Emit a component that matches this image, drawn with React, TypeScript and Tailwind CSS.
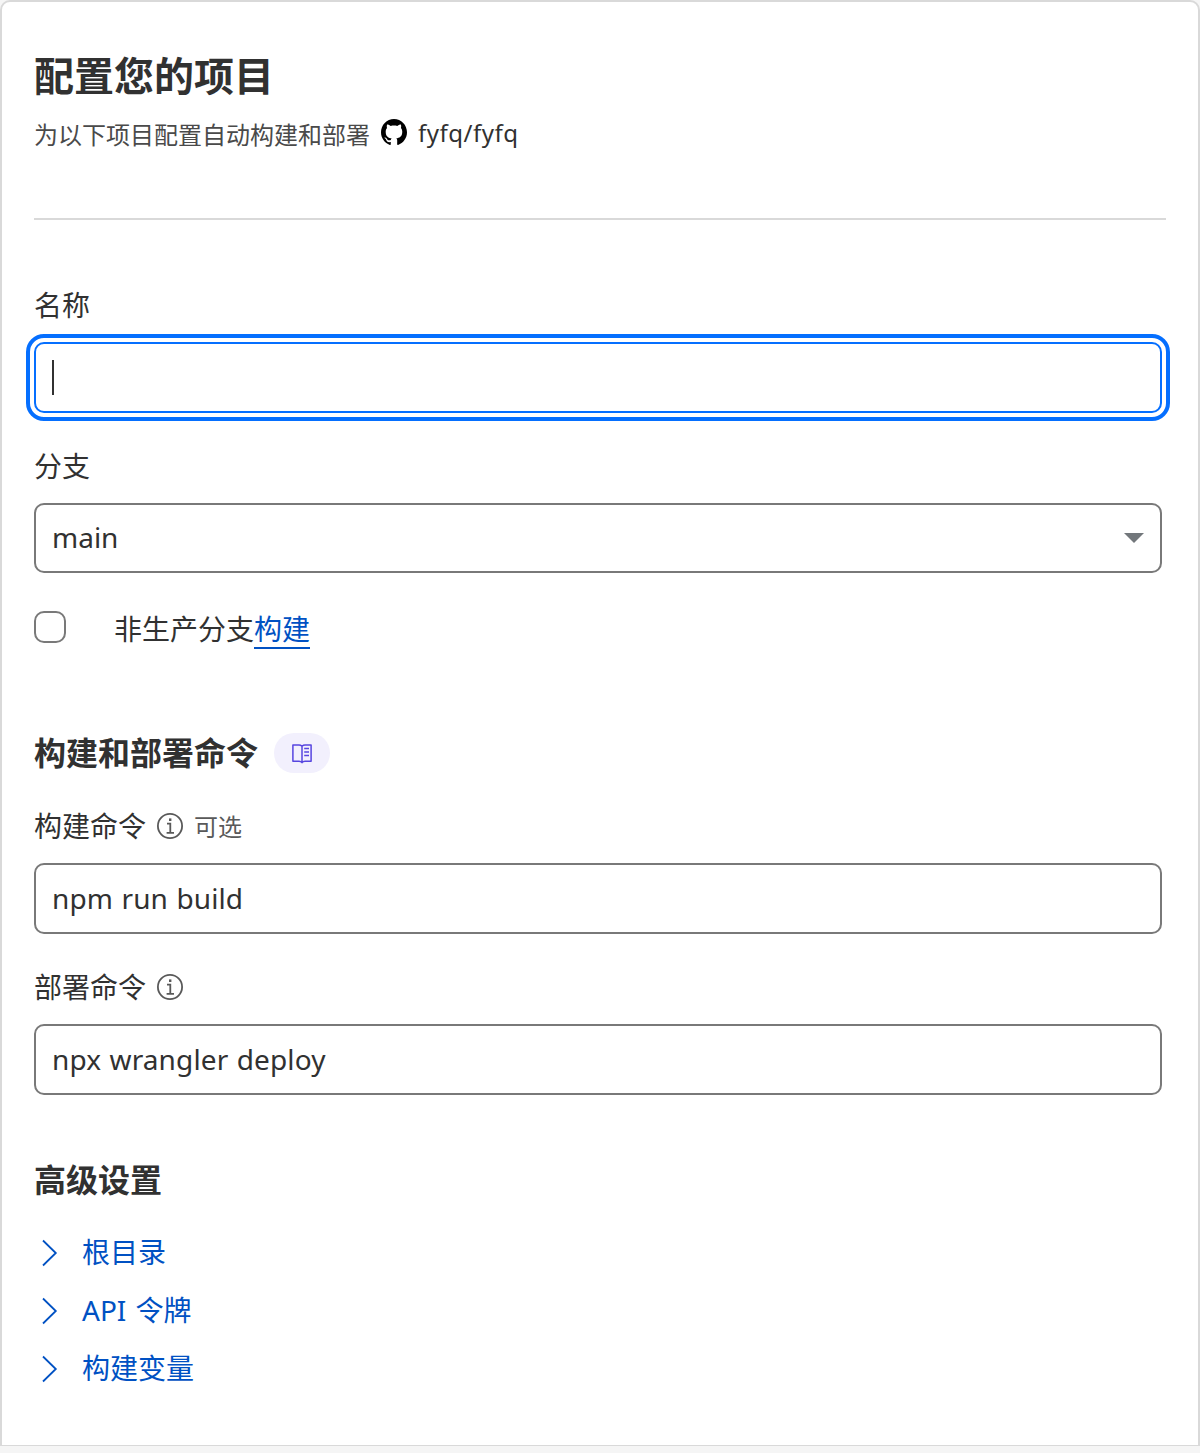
import type { ReactNode } from "react";

function GithubMark() {
  return (
    <svg viewBox="0 0.297 24 23.42" className="ml-[11px] h-[26px] w-[26px] shrink-0 -translate-y-[3px] fill-black" preserveAspectRatio="none">
      <path d="M12 .297c-6.63 0-12 5.373-12 12 0 5.303 3.438 9.8 8.205 11.385.6.113.82-.258.82-.577 0-.285-.01-1.04-.015-2.04-3.338.724-4.042-1.61-4.042-1.61C4.422 18.07 3.633 17.7 3.633 17.7c-1.087-.744.084-.729.084-.729 1.205.084 1.838 1.236 1.838 1.236 1.07 1.835 2.809 1.305 3.495.998.108-.776.417-1.305.76-1.605-2.665-.3-5.466-1.332-5.466-5.93 0-1.31.465-2.38 1.235-3.22-.135-.303-.54-1.523.105-3.176 0 0 1.005-.322 3.3 1.23.96-.267 1.98-.399 3-.405 1.02.006 2.04.138 3 .405 2.28-1.552 3.285-1.23 3.285-1.23.645 1.653.24 2.873.12 3.176.765.84 1.23 1.91 1.23 3.22 0 4.61-2.805 5.625-5.475 5.92.42.36.81 1.096.81 2.22 0 1.606-.015 2.896-.015 3.286 0 .315.21.69.825.57C20.565 22.092 24 17.592 24 12.297c0-6.627-5.373-12-12-12" />
    </svg>
  );
}

function InfoIcon() {
  return (
    <svg viewBox="0 0 26 26" className="ml-[11px] h-[26px] w-[26px] shrink-0" fill="none" stroke="#595959">
      <circle cx="13" cy="13" r="12.1" strokeWidth="1.8" />
      <path d="M10 10.6h3.300v9.200M9.600 19.900h7.400" strokeWidth="1.8" />
      <rect x="12" y="5.400" width="2.400" height="2.600" fill="#595959" stroke="none" />
    </svg>
  );
}

function BookIcon() {
  return (
    <svg viewBox="0 0 20 20" className="h-5 w-5 translate-y-px" fill="none" stroke="#5746e0" strokeWidth="1.5">
      <path d="M10 2.200C9 1.300 8 1 7 1H.9v16.300H7c1.200 0 2.300.4 3 1.300.7-.9 1.800-1.300 3-1.300h6.100V1H13c-1 0-2 .3-3 1.200zM10 2v16.500" strokeLinejoin="round" />
      <path d="M12.200 4.600h4.800M12.200 8h4.800M12.200 11.400h4.800" />
    </svg>
  );
}

function Chevron() {
  return (
    <svg viewBox="0 0 16 28" className="ml-2 h-7 w-4" fill="none" stroke="#0051c3" strokeWidth="1.8">
      <path d="M1 1.500 13.800 14 1 26.500" />
    </svg>
  );
}

function Label({ children }: { children: ReactNode }) {
  return <div className="flex h-10 items-center text-[28px]">{children}</div>;
}

function Field({ children }: { children: ReactNode }) {
  return (
    <div className="mt-[17px] mr-1 flex h-[71px] items-center rounded-[10px] border-2 border-[#797979] pb-0.5 pl-4 text-[28px] tracking-[0.12px] [word-spacing:1px]">
      {children}
    </div>
  );
}

const links = ["根目录", "API 令牌", "构建变量"];

export default function App() {
  return (
    <div className="h-[1453px] bg-[#f5f5f5] font-['Noto_Sans','Noto_Sans_CJK_SC',sans-serif] text-[#313131]">
      <main className="flex h-[1446px] flex-col rounded-t-[10px] border-2 border-b-1 border-[#d9d9d9] bg-white px-8">
        <h1 className="mt-[49px] h-[50px] text-[40px] leading-[50px] font-bold">配置您的项目</h1>
        <div className="mt-4 flex h-9 items-center text-2xl text-[#4a4a4a]">
          <span>为以下项目配置自动构建和部署</span>
          <GithubMark />
          <span className="ml-[11px] pb-1 tracking-[0.5px] text-[#313131]">fyfq/fyfq</span>
        </div>
        <hr className="mt-[65px] border-t-2 border-[#d9d9d9]" />

        <div className="mt-[65px]"><Label>名称</Label></div>
        <div className="mt-[17px] mr-1 flex h-[71px] items-center rounded-[10px] border-2 border-[#056fff] pl-4 outline-4 outline-offset-4 outline-[#056fff]">
          <span className="h-[35px] w-0.5 bg-[#313131]" />
        </div>

        <div className="mt-[33px]"><Label>分支</Label></div>
        <div className="mt-[17px] mr-1 flex h-[70px] items-center justify-between rounded-[10px] border-2 border-[#797979] px-4 text-[28px]">
          <span className="pb-0.5">main</span>
          <svg viewBox="0 0 20 10" className="h-2.5 w-5 fill-[#72777b]"><path d="M0 0h20L10 10z" /></svg>
        </div>

        <div className="mt-[36px] flex h-10 items-center text-[28px]">
          <span className="mb-1 h-8 w-8 rounded-[10px] border-2 border-[#797979]" />
          <span className="ml-12">非生产分支</span>
          <a className="h-10 border-b-2 border-[#0051c3] leading-10 text-[#0051c3]">构建</a>
        </div>

        <div className="mt-[84px] flex h-10 items-center">
          <h2 className="text-[32px] font-bold">构建和部署命令</h2>
          <span className="ml-4 flex h-10 w-14 items-center justify-center rounded-full bg-[#f2f0fd]">
            <BookIcon />
          </span>
        </div>

        <div className="mt-[33px]">
          <Label>
            构建命令
            <InfoIcon />
            <span className="ml-[11px] pt-0.5 text-2xl text-[#595959]">可选</span>
          </Label>
        </div>
        <Field>npm run build</Field>

        <div className="mt-[33px]"><Label>部署命令<InfoIcon /></Label></div>
        <Field>npx wrangler deploy</Field>

        <h2 className="mt-[65px] h-10 text-[32px] leading-10 font-bold">高级设置</h2>
        <ul className="mt-[24px] flex flex-col text-[28px] text-[#0051c3]">
          {links.map((label) => (
            <li key={label} className="flex h-[58px] items-center gap-6">
              <Chevron />
              <span className="pb-0.5 [word-spacing:2px]">{label}</span>
            </li>
          ))}
        </ul>
      </main>
    </div>
  );
}
